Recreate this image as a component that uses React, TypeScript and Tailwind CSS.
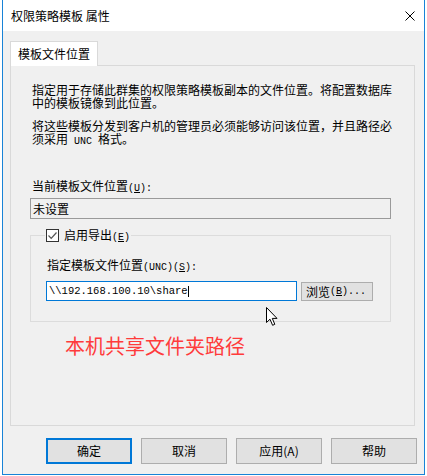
import React from "react";

const CJK = "font-['Noto_Sans_CJK_SC','Microsoft_YaHei',sans-serif]";

function M({ children }: { children: React.ReactNode }) {
  return <span className="font-['Liberation_Mono',monospace] text-[10px]">{children}</span>;
}

function U({ children }: { children: React.ReactNode }) {
  return <span className="underline underline-offset-[1px]">{children}</span>;
}

function Btn({ children, focused }: { children: React.ReactNode; focused?: boolean }) {
  return (
    <div
      className={
        focused
          ? "w-[86px] h-[26px] bg-[#e1e1e1] border-2 border-[#0078d7] flex items-center justify-center leading-[14px]"
          : "w-[86px] h-[26px] bg-[#e1e1e1] border border-[#adadad] flex items-center justify-center leading-[14px]"
      }
    >
      {children}
    </div>
  );
}

export default function App() {
  return (
    <div className={`relative w-[427px] h-[476px] bg-white pl-[2px] overflow-hidden ${CJK} text-[12px] text-black`}>
      <div className="w-[423px] h-[475px] border-x border-b border-[#1883d7] flex flex-col bg-[#f0f0f0]">
        {/* title bar */}
        <div className="h-[31px] shrink-0 bg-white flex items-center justify-between pl-[8px] pr-[9px]">
          <span className="leading-[14px] mt-[1px]">权限策略模板 属性</span>
          <svg width="10" height="10" viewBox="0 0 10 10" className="block">
            <path d="M0.5 0.5 L9.5 9.5 M9.5 0.5 L0.5 9.5" stroke="#000" strokeWidth="1" fill="none" />
          </svg>
        </div>
        {/* body */}
        <div className="pl-[7px] pt-[10px] flex flex-col">
          <div className="flex">
            <div className="relative z-10 -mb-px h-[25px] w-[88px] bg-white border-x border-t border-[#d9d9d9] pl-[7px] flex items-center leading-[14px]">
              模板文件位置
            </div>
          </div>
          <div className="w-[405px] h-[361px] border border-[#d9d9d9] px-[19px] pt-[17px] flex flex-col">
            <div className="ml-[2px] leading-[13px] whitespace-nowrap">
              指定用于存储此群集的权限策略模板副本的文件位置。将配置数据库
              <br />
              中的模板镜像到此位置。
            </div>
            <div className="ml-[2px] mt-[10px] leading-[13px] whitespace-nowrap">
              将这些模板分发到客户机的管理员必须能够访问该位置，并且路径必
              <br />
              须采用<M> UNC </M>格式。
            </div>
            <div className="ml-[2px] mt-[31px] leading-[13px] whitespace-nowrap">
              当前模板文件位置<M>
                (<U>U</U>):
              </M>
            </div>
            <div className="mt-[3px] w-[361px] h-[21px] border border-[#9a9a9a] bg-[#f0f0f0] pl-[2px] flex items-center leading-[13px]">
              未设置
            </div>
            <fieldset className="mt-[10px] w-[361px] border border-[#dcdcdc] pl-[15px] pb-[20px]">
              <legend className="ml-[-1px] pl-[1px] pr-[1px] flex items-center h-[13px] leading-[13px]">
                <span className="w-[13px] h-[13px] border border-[#333333] bg-white flex items-center justify-center">
                  <svg width="11" height="11" viewBox="0 0 11 11" className="block">
                    <path d="M1.5 5.5 L4.2 8.3 L9.5 2.5" stroke="#555" strokeWidth="1.2" fill="none" />
                  </svg>
                </span>
                <span className="ml-[5px] whitespace-nowrap">
                  启用导出<M>
                    (<U>E</U>)
                  </M>
                </span>
              </legend>
              <div className="ml-[1px] mt-[16px] leading-[13px] whitespace-nowrap">
                指定模板文件位置<M>
                  (UNC)(<U>S</U>):
                </M>
              </div>
              <div className="mt-[7px] flex items-start">
                <div className="w-[251px] h-[20px] border border-[#0078d7] bg-white pl-[2px] flex items-center">
                  <span className="font-['Liberation_Mono',monospace] text-[10.5px] leading-[12px] whitespace-pre">
                    {"\\\\192.168.100.10\\share"}
                  </span>
                  <span className="w-px h-[11px] bg-black" />
                </div>
                <div className="ml-[4px] mt-[1px] w-[72px] h-[19px] bg-[#e1e1e1] border border-[#adadad] pl-[4px] flex items-center leading-[13px] whitespace-nowrap">
                  浏览<M>
                    (<U>B</U>)...
                  </M>
                </div>
              </div>
            </fieldset>
            <div className="ml-[35px] mt-[14px] text-[20px] leading-[20px] text-[#ff3b3b] whitespace-nowrap">
              本机共享文件夹路径
            </div>
          </div>
          <div className="flex gap-[9px] pl-[36px] mt-[12px]">
            <Btn focused>确定</Btn>
            <Btn>取消</Btn>
            <Btn>应用(A)</Btn>
            <Btn>帮助</Btn>
          </div>
        </div>
      </div>
      {/* mouse cursor */}
      <svg width="13" height="20" viewBox="0 0 13 20" className="absolute left-[266px] top-[307px]">
        <path d="M0.5 0.5 L0.5 15.5 L4 12.2 L6.6 18.3 L8.8 17.3 L6.3 11.4 L11 11.4 Z" fill="#fff" stroke="#000" strokeWidth="1" strokeLinejoin="miter" />
      </svg>
    </div>
  );
}
